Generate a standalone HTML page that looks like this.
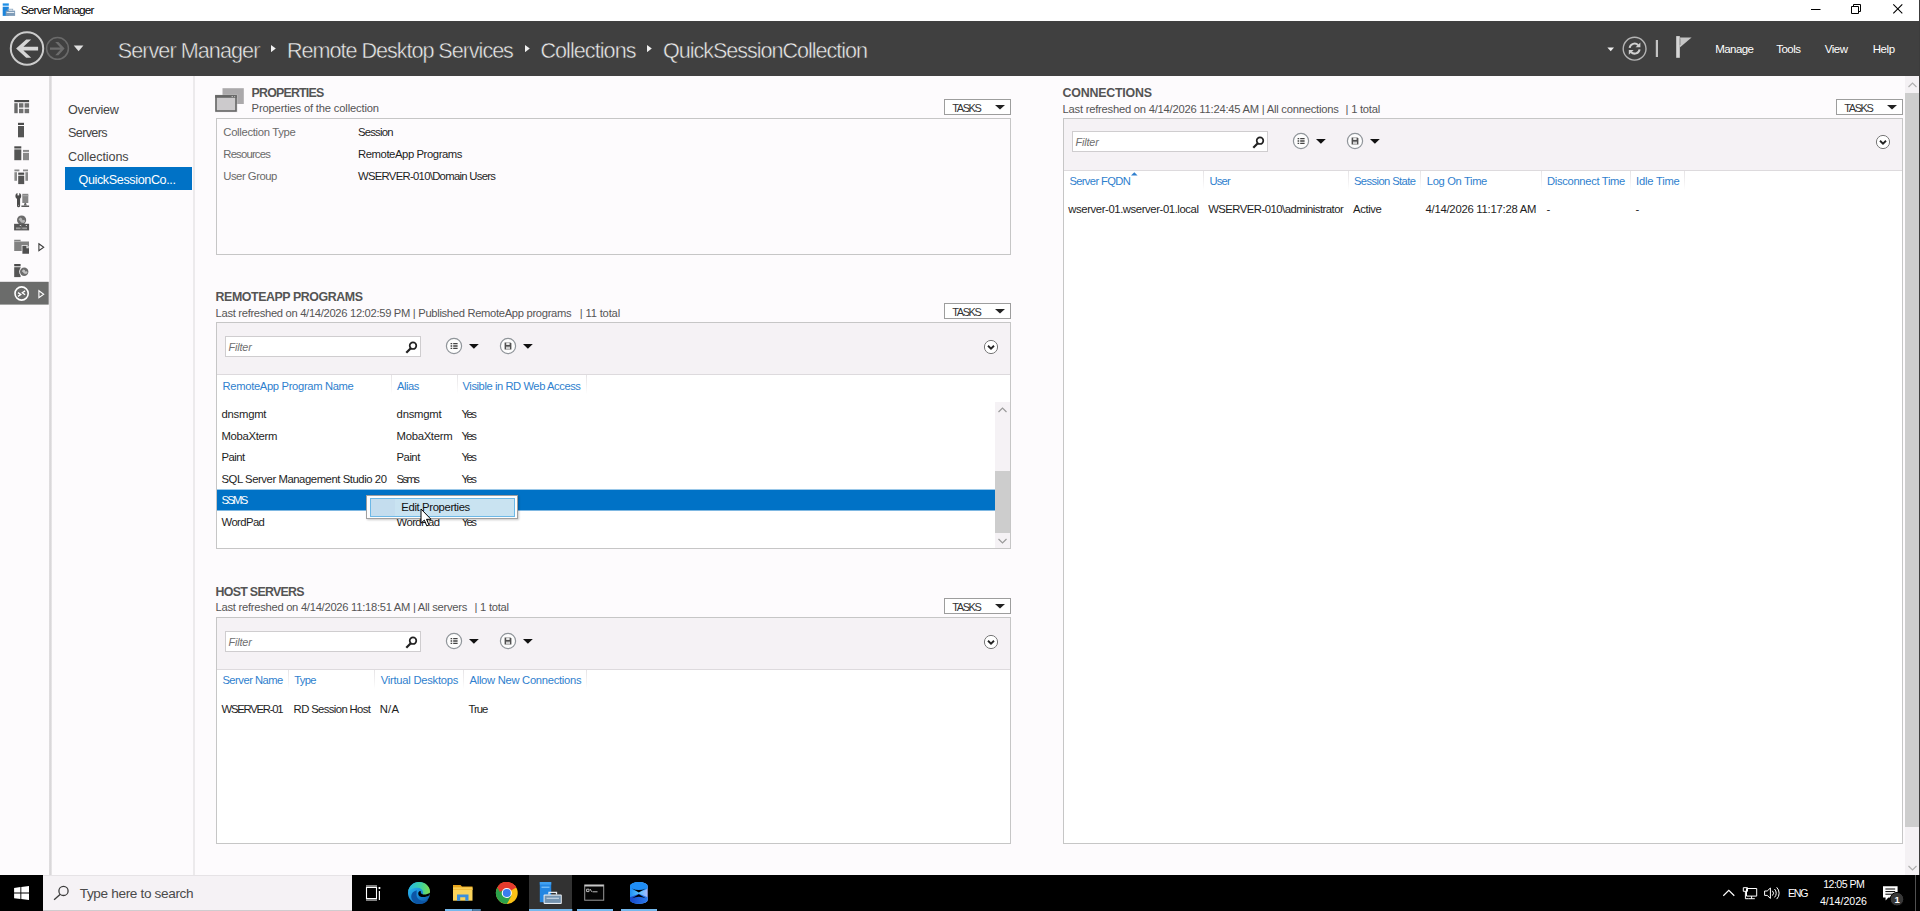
<!DOCTYPE html>
<html lang="en"><head><meta charset="utf-8"><title>Server Manager</title>
<style>
html,body{margin:0;padding:0;background:#fdfbfd;}
body{width:1920px;height:911px;position:relative;overflow:hidden;font-family:"Liberation Sans",sans-serif;}
.r{position:absolute;display:block;}
.t{position:absolute;white-space:pre;display:block;}
</style></head>
<body>
<div class="r" style="left:0px;top:0px;width:1920px;height:21px;background:#ffffff;"></div>
<svg class="r" style="left:2px;top:3px" width="14" height="14" viewBox="2 3 14 14"><rect x="2.7" y="3.4" width="6.1" height="2.3" fill="#1f8fe6"/><rect x="2.7" y="6.7" width="6.1" height="9.2" fill="#1b84dc"/><rect x="5.7" y="10.6" width="9.4" height="5.3" fill="#7f9cb8"/><path d="M8.2 10.6v-1.400h4.400v1.400" stroke="#9ab2c8" fill="none" stroke-width="1.1"/><rect x="6.6" y="12" width="7.600" height="1" fill="#e4ecf3"/></svg>
<span class="t" style="left:20.80px;top:5px;font-size:11.8px;line-height:11.8px;color:#000;letter-spacing:-0.839px;">Server Manager</span>
<svg class="r" style="left:1806px;top:0px" width="110" height="21" viewBox="0 0 110 21"><path d="M5 9.5h9.5" stroke="#000" stroke-width="1" fill="none"/><path d="M45.5 6.5h7v7h-7z M47.5 6.5v-2h7v7h-2" stroke="#000" stroke-width="1" fill="none"/><path d="M87.3 4.3l9 9M96.3 4.3l-9 9" stroke="#000" stroke-width="1.1" fill="none"/></svg>
<div class="r" style="left:0px;top:21px;width:1920px;height:55px;background:#404040;"></div>
<svg class="r" style="left:8px;top:30px" width="80" height="38" viewBox="0 0 80 38"><circle cx="19" cy="18.5" r="16.2" fill="none" stroke="#cccccc" stroke-width="2"/>
<path d="M8.1 18.6L18.2 9.4H23.2L15.4 16.7H30.1V20.5H15.4L23.2 27.8H18.2Z" fill="#d6d6d6"/>
<circle cx="49.5" cy="18.4" r="10.9" fill="none" stroke="#6a6a6a" stroke-width="1.5"/>
<path d="M56.6 18.6L50.4 12H47.2L52.4 17.4H42V19.8H52.4L47.2 25.2H50.4Z" fill="#6c6c6c"/>
<path d="M65.75 15.5H75.4L70.6 21.2Z" fill="#e0e0e0"/></svg>
<span class="t" style="left:117.70px;top:40px;font-size:21.6px;line-height:21.6px;color:#ececec;letter-spacing:-0.936px;-webkit-text-stroke:0.45px #404040;">Server Manager</span>
<span class="t" style="left:287.00px;top:40px;font-size:21.6px;line-height:21.6px;color:#ececec;letter-spacing:-1.032px;-webkit-text-stroke:0.45px #404040;">Remote Desktop Services</span>
<span class="t" style="left:540.40px;top:40px;font-size:21.6px;line-height:21.6px;color:#ececec;letter-spacing:-0.952px;-webkit-text-stroke:0.45px #404040;">Collections</span>
<span class="t" style="left:663.00px;top:40px;font-size:21.6px;line-height:21.6px;color:#ececec;letter-spacing:-1.043px;-webkit-text-stroke:0.45px #404040;">QuickSessionCollection</span>
<svg class="r" style="left:271.3px;top:45px" width="5" height="7.2" viewBox="0 0 5 7.2"><path d="M0 0l4.8 3.6L0 7.2z" fill="#f0f0f0"/></svg>
<svg class="r" style="left:524.8px;top:45px" width="5" height="7.2" viewBox="0 0 5 7.2"><path d="M0 0l4.8 3.6L0 7.2z" fill="#f0f0f0"/></svg>
<svg class="r" style="left:647.3px;top:45px" width="5" height="7.2" viewBox="0 0 5 7.2"><path d="M0 0l4.8 3.6L0 7.2z" fill="#f0f0f0"/></svg>
<svg class="r" style="left:1604px;top:34px" width="92" height="28" viewBox="0 0 92 28"><path d="M3.4 13.5H10L6.7 17.3Z" fill="#f0f0f0"/>
<circle cx="30.6" cy="14.7" r="11.4" fill="none" stroke="#b4b4b4" stroke-width="1.4"/>
<path d="M25.6 13.9a5 5 0 0 1 8.6-2.7" stroke="#d0d0d0" stroke-width="2" fill="none"/><path d="M36.4 8.4v4.8h-4.8z" fill="#d0d0d0"/>
<path d="M35.6 15.3a5 5 0 0 1-8.6 2.7" stroke="#d0d0d0" stroke-width="2" fill="none"/><path d="M24.8 20.8v-4.8h4.8z" fill="#d0d0d0"/>
<path d="M52.9 6v17" stroke="#c4c4c4" stroke-width="2.2"/>
<rect x="72.2" y="2.1" width="3.6" height="21.7" fill="#d6d6d6"/><path d="M75.8 3.5H87.6L75.8 13.6Z" fill="#c6c6c6"/><rect x="75.4" y="4.5" width="1.5" height="6.5" fill="#a0a0a0"/></svg>
<span class="t" style="left:1715.30px;top:44px;font-size:11.5px;line-height:11.5px;color:#fff;letter-spacing:-0.594px;">Manage</span>
<span class="t" style="left:1776.30px;top:44px;font-size:11.5px;line-height:11.5px;color:#fff;letter-spacing:-0.563px;">Tools</span>
<span class="t" style="left:1824.80px;top:44px;font-size:11.5px;line-height:11.5px;color:#fff;letter-spacing:-0.508px;">View</span>
<span class="t" style="left:1872.70px;top:44px;font-size:11.5px;line-height:11.5px;color:#fff;letter-spacing:-0.411px;">Help</span>
<div class="r" style="left:0px;top:76px;width:1920px;height:799px;background:#fdfbfd;"></div>
<div class="r" style="left:49px;top:76px;width:3px;height:799px;background:linear-gradient(to right,#e2e0e2,#d8d6d8 45%,#ebe9eb);"></div>
<div class="r" style="left:193px;top:76px;width:2px;height:799px;background:#eceaec;"></div>
<svg class="r" style="left:0;top:76px" width="49" height="240" viewBox="0 76 49 240">
<!-- dashboard -->
<g fill="#5a5a5a">
<rect x="14.3" y="100" width="14.8" height="2.2" fill="#4a4a4a"/>
<rect x="14.3" y="103.2" width="3.4" height="10" fill="#6a6a6a"/>
<rect x="19" y="103.2" width="4.4" height="4.4" fill="#707070"/><rect x="24.6" y="103.2" width="4.5" height="4.4" fill="#707070"/>
<rect x="19" y="108.8" width="4.4" height="4.4" fill="#707070"/><rect x="24.6" y="108.8" width="4.5" height="4.4" fill="#707070"/>
</g>
<!-- server -->
<rect x="18" y="122.8" width="6" height="2.2" fill="#4c4c4c"/><rect x="18" y="126" width="6" height="11.3" fill="#555"/>
<!-- all servers -->
<rect x="14.3" y="146.3" width="7" height="2.2" fill="#4c4c4c"/><rect x="14.3" y="149.4" width="7" height="10.8" fill="#555"/>
<rect x="23" y="149.9" width="6" height="2" fill="#8a8a8a"/><rect x="23" y="152.8" width="6" height="7.4" fill="#888"/>
<!-- group -->
<rect x="14.4" y="169.5" width="5" height="1.8" fill="#8a8a8a"/><rect x="14.4" y="172.2" width="2.6" height="8.6" fill="#8a8a8a"/>
<rect x="23" y="169.5" width="5" height="1.8" fill="#8a8a8a"/><rect x="25.4" y="172.2" width="2.6" height="8.6" fill="#8a8a8a"/>
<rect x="18.2" y="172.6" width="6" height="2.2" fill="#4c4c4c"/><rect x="18.2" y="175.7" width="6" height="8.4" fill="#555"/>
<!-- wrench + monitor -->
<path d="M17 196.400h3.100v9.400a1.550 1.550 0 0 1-3.100 0z" fill="#4a4a4a"/><circle cx="18.300" cy="196" r="2.900" fill="#4a4a4a"/><path d="M17.500 192.800h1.700v2.600h-1.700z" fill="#fdfbfd"/><circle cx="18.550" cy="205.300" r=".55" fill="#bbb"/>
<rect x="22.300" y="193.800" width="6" height="9.200" fill="#868686"/><rect x="22.300" y="195.200" width="6" height="1" fill="#a8a8a8"/><path d="M24.600 203h1.400l.8 2.600h-3z" fill="#666"/><rect x="21.400" y="205.500" width="7.700" height="1.500" fill="#5a5a5a"/>
<!-- IIS -->
<circle cx="21.600" cy="220" r="4.600" fill="#6c6c6c"/><path d="M18.600 219.600l1.600-2 1.800.8.400 1.800 2-.4.800 1.600-1.600 1.600-2.400-.4-1.200-1.600z" fill="#b4b4b4"/>
<rect x="14.100" y="223.800" width="15" height="6.600" fill="#555"/><rect x="15.900" y="227.400" width="4.700" height="1.800" fill="#9a9a9a"/><rect x="22.200" y="227.400" width="4.800" height="1.800" fill="#9a9a9a"/><rect x="19.800" y="225" width="1" height="1" fill="#eee"/><rect x="25.800" y="225" width="1" height="1" fill="#eee"/><rect x="21.300" y="224.600" width=".7" height="5" fill="#777"/>
<!-- file services -->
<path d="M14.200 239.700h6.400v1.700h8.400v9.600h-14.800z" fill="#828282"/><rect x="14.200" y="241.300" width="6.400" height=".7" fill="#c8c8c8"/>
<path d="M21.700 245h5.300l2.500 2.500v6.800h-7.800z" fill="#fdfbfd"/><path d="M22.400 245.700h4.200l2.400 2.400v5.700h-6.600z" fill="#505050"/><path d="M26.400 245.700v2.600h2.600z" fill="#e0e0e0"/>
<path d="M38.900 243.800l4.800 3.400-4.800 3.400z" fill="none" stroke="#3c3c3c" stroke-width="1.100"/>
<!-- server + globe -->
<rect x="14.200" y="264" width="6.400" height="2.300" fill="#4c4c4c"/><rect x="14.200" y="267.200" width="6.400" height="9.900" fill="#555"/>
<circle cx="24.200" cy="271.700" r="5" fill="#fdfbfd"/><circle cx="24.200" cy="271.700" r="4.200" fill="#6c6c6c"/><path d="M21.800 271.200l1.400-1.800 1.600.6.400 1.600 1.800-.4.600 1.400-1.400 1.400-2.200-.4-1-1.400z" fill="#c0c0c0"/>
<!-- selected RDS -->
<rect x="0" y="281.800" width="48.700" height="22.800" fill="#6b6c6b"/>
<circle cx="21.600" cy="293.500" r="6.600" fill="none" stroke="#fff" stroke-width="1.600"/>
<path d="M18 292.600l2.800 1.900-2.800 1.900M25.100 290.900l-2.800 1.900 2.800 1.900" stroke="#fff" stroke-width="1.300" fill="none"/>
<path d="M38.900 290.700l4.800 3.500-4.800 3.500z" fill="none" stroke="#fff" stroke-width="1.100"/>
</svg>

<span class="t" style="left:68.00px;top:104px;font-size:12.6px;line-height:12.6px;color:#444;letter-spacing:-0.220px;">Overview</span>
<span class="t" style="left:68.00px;top:127px;font-size:12.6px;line-height:12.6px;color:#444;letter-spacing:-0.634px;">Servers</span>
<span class="t" style="left:68.00px;top:151px;font-size:12.6px;line-height:12.6px;color:#444;letter-spacing:-0.101px;">Collections</span>
<div class="r" style="left:65px;top:167px;width:127px;height:23px;background:#0072c6;"></div>
<span class="t" style="left:78.50px;top:174px;font-size:12.6px;line-height:12.6px;color:#fff;letter-spacing:-0.383px;">QuickSessionCo...</span>
<svg class="r" style="left:215px;top:87px" width="30" height="26" viewBox="0 0 30 26"><rect x="7.5" y="1.2" width="21.3" height="15.8" fill="#aba9ab"/><rect x="0" y="7.6" width="22.6" height="17.6" fill="#cfcdcf" opacity=".55"/><rect x="1" y="9" width="20" height="15" fill="#cccacc" stroke="#666" stroke-width="1.6"/><rect x="0.2" y="8.2" width="21.6" height="2.6" fill="#666"/><rect x="16.6" y="9" width="1.4" height="1.1" fill="#b8b8b8"/><rect x="19.2" y="9" width="1" height="1.1" fill="#b8b8b8"/></svg>
<span class="t" style="left:251.60px;top:87px;font-size:12.4px;line-height:12.4px;color:#545454;letter-spacing:-0.813px;font-weight:bold;">PROPERTIES</span>
<span class="t" style="left:251.60px;top:103px;font-size:11.2px;line-height:11.2px;color:#555;letter-spacing:-0.163px;">Properties of the collection</span>
<div class="r" style="left:944px;top:99px;width:67px;height:16px;background:#fff;border:1px solid #9d9d9d;box-sizing:border-box;"></div>
<span class="t" style="left:952.30px;top:103px;font-size:11px;line-height:11px;color:#333;letter-spacing:-1.439px;">TASKS</span>
<svg class="r" style="left:995px;top:104.6px" width="10" height="5" viewBox="0 0 10 5"><path d="M0 0h10l-5 4.6z" fill="#222"/></svg>
<div class="r" style="left:216px;top:118px;width:795px;height:137px;border:1px solid #c6c6c6;box-sizing:border-box;"></div>
<span class="t" style="left:223.30px;top:127px;font-size:11.3px;line-height:11.3px;color:#6a6a6a;letter-spacing:-0.326px;">Collection Type</span>
<span class="t" style="left:223.30px;top:149px;font-size:11.3px;line-height:11.3px;color:#6a6a6a;letter-spacing:-0.814px;">Resources</span>
<span class="t" style="left:223.30px;top:171px;font-size:11.3px;line-height:11.3px;color:#6a6a6a;letter-spacing:-0.491px;">User Group</span>
<span class="t" style="left:358.00px;top:127px;font-size:11.3px;line-height:11.3px;color:#1e1e1e;letter-spacing:-0.788px;">Session</span>
<span class="t" style="left:358.00px;top:149px;font-size:11.3px;line-height:11.3px;color:#1e1e1e;letter-spacing:-0.430px;">RemoteApp Programs</span>
<span class="t" style="left:358.00px;top:171px;font-size:11.3px;line-height:11.3px;color:#1e1e1e;letter-spacing:-0.709px;">WSERVER-010\Domain Users</span>
<span class="t" style="left:215.60px;top:291px;font-size:12.4px;line-height:12.4px;color:#545454;letter-spacing:-0.430px;font-weight:bold;">REMOTEAPP PROGRAMS</span>
<span class="t" style="left:215.60px;top:308px;font-size:11.2px;line-height:11.2px;color:#555;letter-spacing:-0.309px;">Last refreshed on 4/14/2026 12:02:59 PM | Published RemoteApp programs</span>
<span class="t" style="left:579.80px;top:308px;font-size:11.2px;line-height:11.2px;color:#555;letter-spacing:-0.172px;">| 11 total</span>
<div class="r" style="left:944px;top:303px;width:67px;height:16px;background:#fff;border:1px solid #9d9d9d;box-sizing:border-box;"></div>
<span class="t" style="left:952.30px;top:307px;font-size:11px;line-height:11px;color:#333;letter-spacing:-1.439px;">TASKS</span>
<svg class="r" style="left:995px;top:308.6px" width="10" height="5" viewBox="0 0 10 5"><path d="M0 0h10l-5 4.6z" fill="#222"/></svg>
<div class="r" style="left:216px;top:322px;width:795px;height:227px;background:#fff;border:1px solid #c6c6c6;box-sizing:border-box;"></div>
<div class="r" style="left:217px;top:323px;width:793px;height:51px;background:#f5f2f5;"></div>
<div class="r" style="left:217px;top:374px;width:793px;height:1px;background:#dddadd;"></div>
<div class="r" style="left:225px;top:336px;width:196px;height:21px;background:#fff;border:1px solid #cfcdcf;box-sizing:border-box;"></div>
<span class="t" style="left:228.60px;top:342px;font-size:10.8px;line-height:10.8px;color:#707070;letter-spacing:-0.162px;font-style:italic;">Filter</span>
<svg class="r" style="left:405px;top:340.6px" width="13" height="13" viewBox="0 0 13 13"><circle cx="8" cy="4.7" r="3.3" fill="none" stroke="#222" stroke-width="1.7"/><path d="M5.8 7.2L1.3 11.7" stroke="#222" stroke-width="2.2"/></svg>
<svg class="r" style="left:444.8px;top:337.4px" width="18" height="18" viewBox="0 0 18 18"><circle cx="9" cy="9" r="7.6" fill="#fdfdfd" stroke="#90959a" stroke-width="1.2"/><path d="M5.6 6.6h1.6M8.2 6.6h4.4M5.6 9h1.6M8.2 9h4.4M5.6 11.4h1.6M8.2 11.4h4.4" stroke="#444" stroke-width="1.3"/></svg>
<svg class="r" style="left:469.2px;top:343.9px" width="10" height="5" viewBox="0 0 10 5"><path d="M0 0h9.8l-4.9 4.7z" fill="#111"/></svg>
<svg class="r" style="left:498.6px;top:337.4px" width="18" height="18" viewBox="0 0 18 18"><circle cx="9" cy="9" r="7.6" fill="#fdfdfd" stroke="#90959a" stroke-width="1.2"/><path d="M5.6 5.6h5.8l1 1v5.800h-6.800z" fill="#505050"/><rect x="7.2" y="5.600" width="3.400" height="2.400" fill="#e8e8e8"/><rect x="7" y="9.600" width="4" height="2.800" fill="#d0d0d0"/></svg>
<svg class="r" style="left:522.6px;top:343.9px" width="10" height="5" viewBox="0 0 10 5"><path d="M0 0h9.8l-4.9 4.7z" fill="#111"/></svg>
<svg class="r" style="left:983px;top:338.5px" width="16" height="16" viewBox="0 0 16 16"><circle cx="8" cy="8" r="6.6" fill="#fff" stroke="#777" stroke-width="1"/><path d="M5 6.8l3 2.8 3-2.8" stroke="#222" stroke-width="1.9" fill="none"/></svg>
<span class="t" style="left:222.60px;top:381px;font-size:11.2px;line-height:11.2px;color:#2f7fce;letter-spacing:-0.324px;">RemoteApp Program Name</span>
<span class="t" style="left:397.00px;top:381px;font-size:11.2px;line-height:11.2px;color:#2f7fce;letter-spacing:-0.476px;">Alias</span>
<span class="t" style="left:462.50px;top:381px;font-size:11.2px;line-height:11.2px;color:#2f7fce;letter-spacing:-0.429px;">Visible in RD Web Access</span>
<div class="r" style="left:391px;top:375px;width:1px;height:19px;background:linear-gradient(#e6e4e6,#f3f2f3 60%,#fff);"></div>
<div class="r" style="left:457px;top:375px;width:1px;height:19px;background:linear-gradient(#e6e4e6,#f3f2f3 60%,#fff);"></div>
<div class="r" style="left:586px;top:375px;width:1px;height:19px;background:linear-gradient(#e6e4e6,#f3f2f3 60%,#fff);"></div>
<div class="r" style="left:217px;top:489px;width:778px;height:1px;background:rgba(0,114,198,.4);"></div>
<div class="r" style="left:217px;top:490px;width:778px;height:20px;background:#0072c6;"></div>
<div class="r" style="left:217px;top:510px;width:778px;height:1px;background:rgba(0,114,198,.5);"></div>
<span class="t" style="left:221.50px;top:409px;font-size:11.3px;line-height:11.3px;color:#1e1e1e;letter-spacing:-0.241px;">dnsmgmt</span>
<span class="t" style="left:396.60px;top:409px;font-size:11.3px;line-height:11.3px;color:#1e1e1e;letter-spacing:-0.241px;">dnsmgmt</span>
<span class="t" style="left:461.60px;top:409px;font-size:11.3px;line-height:11.3px;color:#1e1e1e;letter-spacing:-1.610px;">Yes</span>
<span class="t" style="left:221.50px;top:431px;font-size:11.3px;line-height:11.3px;color:#1e1e1e;letter-spacing:-0.303px;">MobaXterm</span>
<span class="t" style="left:396.60px;top:431px;font-size:11.3px;line-height:11.3px;color:#1e1e1e;letter-spacing:-0.303px;">MobaXterm</span>
<span class="t" style="left:461.60px;top:431px;font-size:11.3px;line-height:11.3px;color:#1e1e1e;letter-spacing:-1.610px;">Yes</span>
<span class="t" style="left:221.50px;top:452px;font-size:11.3px;line-height:11.3px;color:#1e1e1e;letter-spacing:-0.516px;">Paint</span>
<span class="t" style="left:396.60px;top:452px;font-size:11.3px;line-height:11.3px;color:#1e1e1e;letter-spacing:-0.516px;">Paint</span>
<span class="t" style="left:461.60px;top:452px;font-size:11.3px;line-height:11.3px;color:#1e1e1e;letter-spacing:-1.610px;">Yes</span>
<span class="t" style="left:221.50px;top:474px;font-size:11.3px;line-height:11.3px;color:#1e1e1e;letter-spacing:-0.437px;">SQL Server Management Studio 20</span>
<span class="t" style="left:396.60px;top:474px;font-size:11.3px;line-height:11.3px;color:#1e1e1e;letter-spacing:-1.617px;">Ssms</span>
<span class="t" style="left:461.60px;top:474px;font-size:11.3px;line-height:11.3px;color:#1e1e1e;letter-spacing:-1.610px;">Yes</span>
<span class="t" style="left:221.50px;top:495px;font-size:11.3px;line-height:11.3px;color:#fff;letter-spacing:-1.778px;">SSMS</span>
<span class="t" style="left:221.50px;top:517px;font-size:11.3px;line-height:11.3px;color:#1e1e1e;letter-spacing:-0.583px;">WordPad</span>
<span class="t" style="left:396.60px;top:517px;font-size:11.3px;line-height:11.3px;color:#1e1e1e;letter-spacing:-0.583px;">WordPad</span>
<span class="t" style="left:461.60px;top:517px;font-size:11.3px;line-height:11.3px;color:#1e1e1e;letter-spacing:-1.610px;">Yes</span>
<div class="r" style="left:995px;top:402px;width:15px;height:146px;background:#f5f2f5;"></div>
<div class="r" style="left:995px;top:470.5px;width:15px;height:62.5px;background:#cdcdcd;"></div>
<svg class="r" style="left:998px;top:407px" width="9" height="6" viewBox="0 0 9 6"><path d="M0.5 5l4-4 4 4" stroke="#9a9a9a" stroke-width="1.2" fill="none"/></svg>
<svg class="r" style="left:998px;top:538px" width="9" height="6" viewBox="0 0 9 6"><path d="M0.5 1l4 4 4-4" stroke="#9a9a9a" stroke-width="1.2" fill="none"/></svg>
<div class="r" style="left:366px;top:495px;width:152px;height:24px;background:#fdfdfd;border:1px solid #a0a0a0;box-sizing:border-box;box-shadow:1px 1px 2px rgba(0,0,0,.22);"></div>
<div class="r" style="left:370px;top:498px;width:145px;height:19px;background:#c9e3f1;border:1px solid #6cb8e6;box-sizing:border-box;"></div>
<div class="r" style="left:371px;top:499px;width:24px;height:17px;background:#c4ddee;"></div>
<span class="t" style="left:401.30px;top:502px;font-size:11.3px;line-height:11.3px;color:#111;letter-spacing:-0.366px;">Edit Properties</span>
<svg class="r" style="left:420px;top:508px" width="13" height="20" viewBox="0 0 13 20"><path d="M1 1v14.2l3.3-3.1 2.5 5.8 2.2-1-2.5-5.6h4.5z" fill="#fff" stroke="#000" stroke-width="1"/></svg>
<span class="t" style="left:215.60px;top:586px;font-size:12.4px;line-height:12.4px;color:#545454;letter-spacing:-0.719px;font-weight:bold;">HOST SERVERS</span>
<span class="t" style="left:215.60px;top:602px;font-size:11.2px;line-height:11.2px;color:#555;letter-spacing:-0.270px;">Last refreshed on 4/14/2026 11:18:51 AM | All servers</span>
<span class="t" style="left:474.50px;top:602px;font-size:11.2px;line-height:11.2px;color:#555;letter-spacing:-0.239px;">| 1 total</span>
<div class="r" style="left:944px;top:598px;width:67px;height:16px;background:#fff;border:1px solid #9d9d9d;box-sizing:border-box;"></div>
<span class="t" style="left:952.30px;top:602px;font-size:11px;line-height:11px;color:#333;letter-spacing:-1.439px;">TASKS</span>
<svg class="r" style="left:995px;top:603.6px" width="10" height="5" viewBox="0 0 10 5"><path d="M0 0h10l-5 4.6z" fill="#222"/></svg>
<div class="r" style="left:216px;top:617px;width:795px;height:227px;background:#fff;border:1px solid #c6c6c6;box-sizing:border-box;"></div>
<div class="r" style="left:217px;top:618px;width:793px;height:51px;background:#f5f2f5;"></div>
<div class="r" style="left:217px;top:669px;width:793px;height:1px;background:#dddadd;"></div>
<div class="r" style="left:225px;top:631px;width:196px;height:21px;background:#fff;border:1px solid #cfcdcf;box-sizing:border-box;"></div>
<span class="t" style="left:228.60px;top:637px;font-size:10.8px;line-height:10.8px;color:#707070;letter-spacing:-0.162px;font-style:italic;">Filter</span>
<svg class="r" style="left:405px;top:635.6px" width="13" height="13" viewBox="0 0 13 13"><circle cx="8" cy="4.7" r="3.3" fill="none" stroke="#222" stroke-width="1.7"/><path d="M5.8 7.2L1.3 11.7" stroke="#222" stroke-width="2.2"/></svg>
<svg class="r" style="left:444.8px;top:632.4px" width="18" height="18" viewBox="0 0 18 18"><circle cx="9" cy="9" r="7.6" fill="#fdfdfd" stroke="#90959a" stroke-width="1.2"/><path d="M5.6 6.6h1.6M8.2 6.6h4.4M5.6 9h1.6M8.2 9h4.4M5.6 11.4h1.6M8.2 11.4h4.4" stroke="#444" stroke-width="1.3"/></svg>
<svg class="r" style="left:469.2px;top:638.9px" width="10" height="5" viewBox="0 0 10 5"><path d="M0 0h9.8l-4.9 4.7z" fill="#111"/></svg>
<svg class="r" style="left:498.6px;top:632.4px" width="18" height="18" viewBox="0 0 18 18"><circle cx="9" cy="9" r="7.6" fill="#fdfdfd" stroke="#90959a" stroke-width="1.2"/><path d="M5.6 5.6h5.8l1 1v5.800h-6.800z" fill="#505050"/><rect x="7.2" y="5.600" width="3.400" height="2.400" fill="#e8e8e8"/><rect x="7" y="9.600" width="4" height="2.800" fill="#d0d0d0"/></svg>
<svg class="r" style="left:522.6px;top:638.9px" width="10" height="5" viewBox="0 0 10 5"><path d="M0 0h9.8l-4.9 4.7z" fill="#111"/></svg>
<svg class="r" style="left:983px;top:633.5px" width="16" height="16" viewBox="0 0 16 16"><circle cx="8" cy="8" r="6.6" fill="#fff" stroke="#777" stroke-width="1"/><path d="M5 6.8l3 2.8 3-2.8" stroke="#222" stroke-width="1.9" fill="none"/></svg>
<span class="t" style="left:222.40px;top:675px;font-size:11.2px;line-height:11.2px;color:#2f7fce;letter-spacing:-0.497px;">Server Name</span>
<span class="t" style="left:294.30px;top:675px;font-size:11.2px;line-height:11.2px;color:#2f7fce;letter-spacing:-0.701px;">Type</span>
<span class="t" style="left:380.70px;top:675px;font-size:11.2px;line-height:11.2px;color:#2f7fce;letter-spacing:-0.238px;">Virtual Desktops</span>
<span class="t" style="left:469.50px;top:675px;font-size:11.2px;line-height:11.2px;color:#2f7fce;letter-spacing:-0.273px;">Allow New Connections</span>
<div class="r" style="left:288px;top:670px;width:1px;height:19px;background:linear-gradient(#e6e4e6,#f3f2f3 60%,#fff);"></div>
<div class="r" style="left:374px;top:670px;width:1px;height:19px;background:linear-gradient(#e6e4e6,#f3f2f3 60%,#fff);"></div>
<div class="r" style="left:463px;top:670px;width:1px;height:19px;background:linear-gradient(#e6e4e6,#f3f2f3 60%,#fff);"></div>
<div class="r" style="left:586px;top:670px;width:1px;height:19px;background:linear-gradient(#e6e4e6,#f3f2f3 60%,#fff);"></div>
<span class="t" style="left:221.50px;top:704px;font-size:11.3px;line-height:11.3px;color:#1e1e1e;letter-spacing:-1.253px;">WSERVER-01</span>
<span class="t" style="left:293.60px;top:704px;font-size:11.3px;line-height:11.3px;color:#1e1e1e;letter-spacing:-0.618px;">RD Session Host</span>
<span class="t" style="left:379.80px;top:704px;font-size:11.3px;line-height:11.3px;color:#1e1e1e;letter-spacing:0.164px;">N/A</span>
<span class="t" style="left:468.40px;top:704px;font-size:11.3px;line-height:11.3px;color:#1e1e1e;letter-spacing:-0.942px;">True</span>
<span class="t" style="left:1062.60px;top:87px;font-size:12.4px;line-height:12.4px;color:#545454;letter-spacing:-0.214px;font-weight:bold;">CONNECTIONS</span>
<span class="t" style="left:1062.60px;top:104px;font-size:11.2px;line-height:11.2px;color:#555;letter-spacing:-0.225px;">Last refreshed on 4/14/2026 11:24:45 AM | All connections</span>
<span class="t" style="left:1345.60px;top:104px;font-size:11.2px;line-height:11.2px;color:#555;letter-spacing:-0.239px;">| 1 total</span>
<div class="r" style="left:1836px;top:99px;width:67px;height:16px;background:#fff;border:1px solid #9d9d9d;box-sizing:border-box;"></div>
<span class="t" style="left:1844.30px;top:103px;font-size:11px;line-height:11px;color:#333;letter-spacing:-1.439px;">TASKS</span>
<svg class="r" style="left:1887px;top:104.6px" width="10" height="5" viewBox="0 0 10 5"><path d="M0 0h10l-5 4.6z" fill="#222"/></svg>
<div class="r" style="left:1063px;top:118px;width:840px;height:726px;background:#fff;border:1px solid #c6c6c6;box-sizing:border-box;"></div>
<div class="r" style="left:1064px;top:119px;width:838px;height:51px;background:#f5f2f5;"></div>
<div class="r" style="left:1064px;top:170px;width:838px;height:1px;background:#dddadd;"></div>
<div class="r" style="left:1072px;top:131px;width:196px;height:21px;background:#fff;border:1px solid #cfcdcf;box-sizing:border-box;"></div>
<span class="t" style="left:1075.60px;top:137px;font-size:10.8px;line-height:10.8px;color:#707070;letter-spacing:-0.162px;font-style:italic;">Filter</span>
<svg class="r" style="left:1252px;top:135.6px" width="13" height="13" viewBox="0 0 13 13"><circle cx="8" cy="4.7" r="3.3" fill="none" stroke="#222" stroke-width="1.7"/><path d="M5.8 7.2L1.3 11.7" stroke="#222" stroke-width="2.2"/></svg>
<svg class="r" style="left:1291.8px;top:132.4px" width="18" height="18" viewBox="0 0 18 18"><circle cx="9" cy="9" r="7.6" fill="#fdfdfd" stroke="#90959a" stroke-width="1.2"/><path d="M5.6 6.6h1.6M8.2 6.6h4.4M5.6 9h1.6M8.2 9h4.4M5.6 11.4h1.6M8.2 11.4h4.4" stroke="#444" stroke-width="1.3"/></svg>
<svg class="r" style="left:1316.2px;top:138.9px" width="10" height="5" viewBox="0 0 10 5"><path d="M0 0h9.8l-4.9 4.7z" fill="#111"/></svg>
<svg class="r" style="left:1345.6px;top:132.4px" width="18" height="18" viewBox="0 0 18 18"><circle cx="9" cy="9" r="7.6" fill="#fdfdfd" stroke="#90959a" stroke-width="1.2"/><path d="M5.6 5.6h5.8l1 1v5.800h-6.800z" fill="#505050"/><rect x="7.2" y="5.600" width="3.400" height="2.400" fill="#e8e8e8"/><rect x="7" y="9.600" width="4" height="2.800" fill="#d0d0d0"/></svg>
<svg class="r" style="left:1369.6px;top:138.9px" width="10" height="5" viewBox="0 0 10 5"><path d="M0 0h9.8l-4.9 4.7z" fill="#111"/></svg>
<svg class="r" style="left:1875px;top:133.5px" width="16" height="16" viewBox="0 0 16 16"><circle cx="8" cy="8" r="6.6" fill="#fff" stroke="#777" stroke-width="1"/><path d="M5 6.8l3 2.8 3-2.8" stroke="#222" stroke-width="1.9" fill="none"/></svg>
<span class="t" style="left:1069.40px;top:176px;font-size:11.2px;line-height:11.2px;color:#2f7fce;letter-spacing:-0.642px;">Server FQDN</span>
<svg class="r" style="left:1131px;top:171.6px" width="7" height="4" viewBox="0 0 7 4"><path d="M0 3.6l3.3-3.4 3.3 3.4z" fill="#2f7fce"/></svg>
<span class="t" style="left:1209.40px;top:176px;font-size:11.2px;line-height:11.2px;color:#2f7fce;letter-spacing:-0.744px;">User</span>
<span class="t" style="left:1354.00px;top:176px;font-size:11.2px;line-height:11.2px;color:#2f7fce;letter-spacing:-0.592px;">Session State</span>
<span class="t" style="left:1426.80px;top:176px;font-size:11.2px;line-height:11.2px;color:#2f7fce;letter-spacing:-0.352px;">Log On Time</span>
<span class="t" style="left:1547.00px;top:176px;font-size:11.2px;line-height:11.2px;color:#2f7fce;letter-spacing:-0.312px;">Disconnect Time</span>
<span class="t" style="left:1636.00px;top:176px;font-size:11.2px;line-height:11.2px;color:#2f7fce;letter-spacing:-0.202px;">Idle Time</span>
<div class="r" style="left:1203px;top:171px;width:1px;height:19px;background:linear-gradient(#e6e4e6,#f3f2f3 60%,#fff);"></div>
<div class="r" style="left:1348px;top:171px;width:1px;height:19px;background:linear-gradient(#e6e4e6,#f3f2f3 60%,#fff);"></div>
<div class="r" style="left:1420px;top:171px;width:1px;height:19px;background:linear-gradient(#e6e4e6,#f3f2f3 60%,#fff);"></div>
<div class="r" style="left:1541px;top:171px;width:1px;height:19px;background:linear-gradient(#e6e4e6,#f3f2f3 60%,#fff);"></div>
<div class="r" style="left:1630px;top:171px;width:1px;height:19px;background:linear-gradient(#e6e4e6,#f3f2f3 60%,#fff);"></div>
<div class="r" style="left:1684px;top:171px;width:1px;height:19px;background:linear-gradient(#e6e4e6,#f3f2f3 60%,#fff);"></div>
<span class="t" style="left:1068.36px;top:204px;font-size:11.3px;line-height:11.3px;color:#1e1e1e;letter-spacing:-0.410px;">wserver-01.wserver-01.local</span>
<span class="t" style="left:1208.20px;top:204px;font-size:11.3px;line-height:11.3px;color:#1e1e1e;letter-spacing:-0.518px;">WSERVER-010\administrator</span>
<span class="t" style="left:1353.00px;top:204px;font-size:11.3px;line-height:11.3px;color:#1e1e1e;letter-spacing:-0.398px;">Active</span>
<span class="t" style="left:1425.50px;top:204px;font-size:11.3px;line-height:11.3px;color:#1e1e1e;letter-spacing:-0.253px;">4/14/2026 11:17:28 AM</span>
<span class="t" style="left:1546.40px;top:204px;font-size:11.3px;line-height:11.3px;color:#1e1e1e;">-</span>
<span class="t" style="left:1635.60px;top:204px;font-size:11.3px;line-height:11.3px;color:#1e1e1e;">-</span>
<div class="r" style="left:1905px;top:76px;width:15px;height:799px;background:#f4f1f4;"></div>
<div class="r" style="left:1905px;top:93px;width:15px;height:733.5px;background:#cdcdcd;"></div>
<svg class="r" style="left:1908px;top:82px" width="9" height="6" viewBox="0 0 9 6"><path d="M0.5 5l4-4 4 4" stroke="#b0b0b0" stroke-width="1.2" fill="none"/></svg>
<svg class="r" style="left:1908px;top:865px" width="9" height="6" viewBox="0 0 9 6"><path d="M0.5 1l4 4 4-4" stroke="#b0b0b0" stroke-width="1.2" fill="none"/></svg>
<div class="r" style="left:1919px;top:0px;width:1px;height:875px;background:#3c3c3c;"></div>
<div class="r" style="left:0;top:875px;width:1920px;height:36px;background:#000"></div>
<div class="r" style="left:43px;top:875px;width:309px;height:36px;background:#f5f2f5;border-bottom:1px solid #cfcccf;border-top:1px solid #e6e3e6;box-sizing:border-box"></div>
<div class="r" style="left:529px;top:875px;width:43px;height:36px;background:#323232"></div>
<svg class="r" style="left:0;top:875px" width="1920" height="36" viewBox="0 875 1920 36">
<defs>
<linearGradient id="eg1" x1="0" y1="0" x2="1" y2="1"><stop offset="0" stop-color="#2fc0f0"/><stop offset=".5" stop-color="#1b8fdc"/><stop offset="1" stop-color="#0b4f9c"/></linearGradient>
<linearGradient id="eg2" x1="0" y1="0" x2="1" y2="0"><stop offset="0" stop-color="#25b8ea"/><stop offset=".6" stop-color="#3fd29c"/><stop offset="1" stop-color="#7fdc4c"/></linearGradient>
<linearGradient id="bg1" x1="0" y1="0" x2="1" y2="0"><stop offset="0" stop-color="#1e8ef5"/><stop offset=".5" stop-color="#55c0ff"/><stop offset="1" stop-color="#a9b8ff"/></linearGradient>
<linearGradient id="bg2" x1="0" y1="0" x2="1" y2="0"><stop offset="0" stop-color="#1746c8"/><stop offset="1" stop-color="#2a7cf0"/></linearGradient>
</defs>
<!-- start -->
<path d="M14.100 887.900L20.400 887V892.600H14.100ZM21.300 886.900L29 885.900V892.600H21.300ZM14.100 893.500H20.400V899L14.100 898.200ZM21.300 893.500H29V900.100L21.300 899.100Z" fill="#fff"/>
<!-- search icon -->
<circle cx="63.500" cy="890.900" r="4.600" fill="none" stroke="#3c3c3c" stroke-width="1.300"/><path d="M60.300 894.300l-6.200 5.400" stroke="#3c3c3c" stroke-width="1.400"/>
<!-- task view -->
<path d="M366.500 887.500h10v11h-10z" fill="none" stroke="#fff" stroke-width="1.100"/><path d="M366 886h11M366 900h11" stroke="#fff" stroke-width="1"/><path d="M379.400 891v9" stroke="#fff" stroke-width="1.200"/><rect x="378.600" y="887" width="1.700" height="2" fill="#fff"/>
<!-- edge -->
<circle cx="419" cy="893" r="11" fill="url(#eg1)"/>
<path d="M408.200 891.600c.800-5.600 5.600-9.600 10.800-9.600 6 0 11 4.200 11 9.400 0 3.200-2.400 5.200-5.400 5.200-1.800 0-2.800-.600-2.600-1.400.800-.800 1.200-1.800 1-3-.400-2.600-2.600-4.400-5.600-4.400-4.200 0-7.800 2-9.200 3.800z" fill="url(#eg2)"/>
<path d="M416.600 893.400c-.600 3.800 2.200 7 6.400 7.400 2 .200 4-.400 5.400-1.400-2.200 3.400-5.800 4.800-9.600 4.600-4.600-.200-7.600-3.800-7.600-7.400 0-3 2-5.600 5.600-6.400-.200 1-.200 2.200-.200 3.200z" fill="#0c56a6"/>
<path d="M419.200 891.200c-1.600 1.600-1.200 4.200.8 5.200 3 1.400 6.800.600 9.600-1.400l.4-2.200c-2.800 1.800-6 2.300-8 1.300-1.300-.700-1.500-1.700-.9-2.900z" fill="#000"/>
<!-- explorer -->
<path d="M453 885h7.500l1.500 1.600h10.500v3H453z" fill="#e6a41c"/><path d="M453 887.400h19.500v13.300H453z" fill="#fbd45c"/><path d="M453 888.800h19.500v1.200H453z" fill="#f2bd3c"/><path d="M457 894.600h11.500v6.100h-3.200v-3.400h-5.100v3.400H457z" fill="#3b8fdc"/>
<!-- chrome -->
<circle cx="506.800" cy="893" r="10.900" fill="#fbc116"/>
<path d="M506.800 893L497.360 887.550A10.900 10.900 0 0 1 516.240 887.550z" fill="#e33b2e"/>
<path d="M506.800 893l-9.440-5.450A10.900 10.900 0 0 0 506.800 903.900l4.700-8.100z" fill="#2ba14b"/>
<path d="M506.800 887.600h9.440A10.900 10.900 0 0 0 497.360 887.550l2.600 4.500z" fill="#e33b2e"/>
<circle cx="506.800" cy="893" r="5.100" fill="#fff"/><circle cx="506.800" cy="893" r="4" fill="#3b7ded"/>
<!-- server manager -->
<rect x="539.800" y="882" width="11.400" height="20.200" fill="#2487e2"/><rect x="539.800" y="882" width="11.400" height="2.600" fill="#3fa0f0"/><rect x="541.500" y="886.600" width="8" height="1.300" fill="#7cc0f8"/>
<rect x="543.600" y="894.600" width="18.200" height="9.300" rx="1" fill="#e8eef4"/><rect x="544.600" y="895.600" width="16.200" height="7.300" fill="#7393b0"/><path d="M549 894.600v-2.200h7.500v2.200" fill="none" stroke="#e8eef4" stroke-width="1.300"/><path d="M546.500 898.300h12.500" stroke="#c4d4e4" stroke-width="1.200"/>
<!-- cmd -->
<rect x="584.700" y="884.900" width="19" height="15.300" fill="#050505" stroke="#9a9a9a" stroke-width="1"/><rect x="584.700" y="884.900" width="19" height="1.600" fill="#c8c8c8"/><path d="M586.600 889.200h2.400v2.400h-2.400zM590 889l1.800 2.800M592.500 891.800h5" stroke="#bdbdbd" stroke-width="1" fill="none"/>
<!-- blue app -->
<path d="M630 886a8.850 4 0 0 1 17.700 0v14a8.850 3.900 0 0 1-17.700 0z" fill="url(#bg1)"/>
<path d="M630 886a8.850 4 0 0 1 17.700 0v1.500a8.850 3.600 0 0 1-17.700 0z" fill="#1f8df4"/>
<path d="M630 897.200l8.800-3.400 8.900 3.400v2.800a8.850 3.900 0 0 1-17.700 0z" fill="url(#bg2)"/>
<path d="M632 888.400Q638.800 891.400 645.700 888.400L638.800 892.500Z" fill="#000"/>
<path d="M632 898.300Q638.800 895.300 645.700 898.300L638.800 894.200Z" fill="#000"/>
<!-- underlines -->
<rect x="445" y="909" width="27.300" height="2" fill="#76b9ed"/><rect x="472.300" y="909" width="8.500" height="2" fill="#4f7ea6"/>
<rect x="529" y="909" width="43.300" height="2" fill="#76b9ed"/>
<rect x="577" y="909" width="36" height="2" fill="#76b9ed"/>
<rect x="621" y="909" width="36" height="2" fill="#76b9ed"/>
<!-- tray -->
<path d="M1723.300 895.800l5.500-5.400 5.500 5.400" stroke="#fff" stroke-width="1.200" fill="none"/>
<path d="M1746.500 888.500h10.200v7.600h-10.200z" fill="none" stroke="#fff" stroke-width="1"/><path d="M1743.300 887.700h4.200v3.600h-4.200zM1745.400 891.300v7.400h3M1751.600 896.100v2.600M1748.400 898.700h6.400" fill="none" stroke="#fff" stroke-width="1"/>
<path d="M1764.600 891h2.600l3.200-3v10.400l-3.200-3h-2.600z" fill="none" stroke="#fff" stroke-width="1"/><path d="M1772.400 890.800a3.400 3.400 0 0 1 0 4.800M1774.500 889a6 6 0 0 1 0 8.400M1776.700 887.300a8.400 8.400 0 0 1 0 11.800" stroke="#fff" stroke-width="1" fill="none"/>
<!-- notification -->
<path d="M1883 886.200h14.600v11.400h-9.200l-2.800 2.800v-2.800H1883z" fill="#fff"/><path d="M1885.400 889h9.800M1885.400 891.600h9.800M1885.400 894.200h9.800" stroke="#000" stroke-width="1"/>
<circle cx="1897" cy="899.200" r="6.800" fill="#383838" stroke="#000" stroke-width="1"/><text x="1897.2" y="902.7" font-family="Liberation Sans, sans-serif" font-size="9.5" font-weight="bold" fill="#fff" text-anchor="middle">1</text>
<rect x="1915" y="875" width="1" height="36" fill="#505050"/>
</svg>

<span class="t" style="left:79.70px;top:887px;font-size:13.6px;line-height:13.6px;color:#4a4a4a;letter-spacing:-0.346px;">Type here to search</span>
<span class="t" style="left:1787.90px;top:888px;font-size:10.6px;line-height:10.6px;color:#fff;letter-spacing:-1.225px;">ENG</span>
<span class="t" style="left:1823.20px;top:879px;font-size:10.6px;line-height:10.6px;color:#fff;letter-spacing:-0.538px;">12:05 PM</span>
<span class="t" style="left:1819.90px;top:896px;font-size:10.6px;line-height:10.6px;color:#fff;letter-spacing:-0.009px;">4/14/2026</span>
</body></html>
